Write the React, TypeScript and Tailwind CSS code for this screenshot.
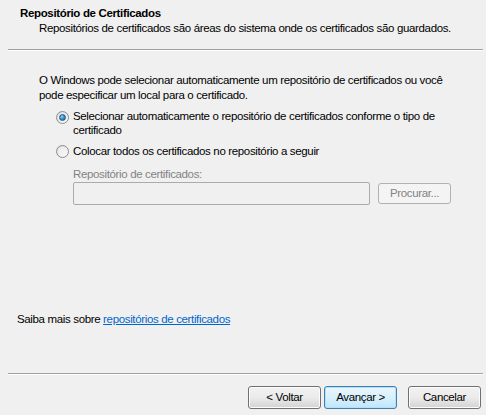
import React from 'react';

// Classic Windows radio button, drawn with nested circles
const Radio: React.FC<{ checked?: boolean }> = ({ checked }) => (
    <span className="relative flex h-[13px] w-[13px] shrink-0 items-center justify-center rounded-full border border-[#8e8f8f] bg-gradient-to-br from-[#d6d6d6] to-[#fbfbfb]">
        <span className="flex h-[9px] w-[9px] items-center justify-center rounded-full bg-gradient-to-br from-[#eaeaea] to-[#f8f8f8]">
            {checked && (
                <span className="h-[7px] w-[7px] rounded-full border border-[#1c5b8c] bg-[radial-gradient(circle_at_35%_35%,#9ad4f6_0%,#3f93cf_45%,#1a5f97_100%)]" />
            )}
        </span>
    </span>
);

const WizardButton: React.FC<{ label: string; primary?: boolean; disabled?: boolean }> = ({ label, primary, disabled }) => {
    if (disabled) {
        return (
            <div className="flex h-[21px] w-[73px] items-center justify-center rounded-[3px] border border-[#adb2b5] bg-[#f4f4f4] text-[#838383]">
                {label}
            </div>
        );
    }
    return (
        <div
            className={
                primary
                    ? 'flex h-[23px] w-[73px] items-center justify-center rounded-[3px] border border-[#3c7fb1] bg-gradient-to-b from-[#eaf6fd] via-[#d9f0fc] to-[#bee6fd] text-black shadow-[inset_0_0_0_1px_#b7dff7]'
                    : 'flex h-[23px] w-[73px] items-center justify-center rounded-[3px] border border-[#707070] bg-gradient-to-b from-[#f2f2f2] via-[#ebebeb] to-[#d3d3d3] text-black shadow-[inset_0_0_0_1px_#fcfcfc]'
            }
        >
            {label}
        </div>
    );
};

const Separator: React.FC = () => (
    <div className="ml-[8px] mr-[3px] h-[2px] border-t border-[#a0a0a0] border-b border-b-white" />
);

export default function App() {
    return (
        <div className="flex h-[415px] w-[486px] flex-col bg-[#f0f0f0] text-[11.5px] leading-[15px] tracking-[-0.35px] text-black [font-family:'Liberation_Sans',Arial,sans-serif]">
            {/* header */}
            <div className="h-[49px] pt-[6px]">
                <div className="pl-[20px] font-bold">Repositório de Certificados</div>
                <div className="pl-[39px]">Repositórios de certificados são áreas do sistema onde os certificados são guardados.</div>
            </div>
            <Separator />

            {/* body */}
            <div className="flex flex-1 flex-col">
                <div className="pl-[39px] pr-[24px] pt-[22px]">
                    O Windows pode selecionar automaticamente um repositório de certificados ou você pode especificar um local para o certificado.
                </div>

                <div className="mt-[6px] flex gap-[4px] pl-[56px] pr-[24px]">
                    <div className="pt-[2px]">
                        <Radio checked />
                    </div>
                    <div className="leading-[14px]">
                        Selecionar automaticamente o repositório de certificados conforme o tipo de certificado
                    </div>
                </div>

                <div className="mt-[7px] flex items-center gap-[4px] pl-[56px]">
                    <Radio />
                    <div>Colocar todos os certificados no repositório a seguir</div>
                </div>

                <div className="mt-[8px] pl-[73px] text-[#838383]">Repositório de certificados:</div>
                <div className="flex items-center gap-[8px] pl-[73px]">
                    <div className="h-[23px] w-[297px] rounded-[2px] border border-[#ababab] bg-[#f0f0f0]" />
                    <WizardButton label="Procurar..." disabled />
                </div>

                <div className="mt-auto mb-[46px] pl-[17px]">
                    Saiba mais sobre <span className="text-[#0066cc] underline">repositórios de certificados</span>
                </div>
            </div>

            <Separator />

            {/* footer buttons */}
            <div className="flex h-[40px] items-start justify-end pr-[5px] pt-[11px]">
                <div className="flex gap-[3px]">
                    <WizardButton label="< Voltar" />
                    <WizardButton label="Avançar >" primary />
                </div>
                <div className="ml-[11px]">
                    <WizardButton label="Cancelar" />
                </div>
            </div>
        </div>
    );
}
